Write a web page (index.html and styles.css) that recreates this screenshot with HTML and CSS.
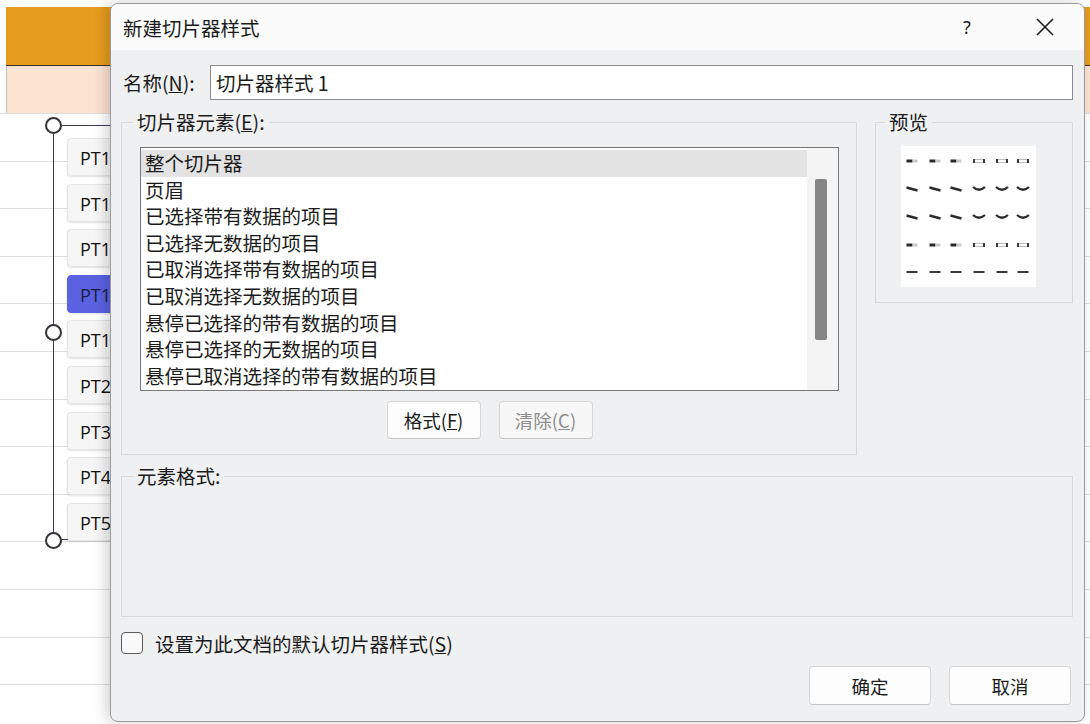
FILE: index.html
```html
<!DOCTYPE html>
<html lang="zh-CN">
<head>
    <meta charset="UTF-8">
    <title>新建切片器样式</title>
    <link rel="stylesheet" href="styles.css">
</head>
<body>
    <div class="sheet">
        <div class="row row-top"></div>
        <div class="row row-head"><div class="cell-head"></div></div>
        <div class="row row-sub"><div class="cell-sub"></div></div>
        <div class="row"></div><div class="row"></div><div class="row"></div>
        <div class="row"></div><div class="row"></div><div class="row"></div>
        <div class="row"></div><div class="row"></div><div class="row"></div>
        <div class="row"></div><div class="row"></div><div class="row"></div>
    </div>

    <!-- slicer sitting on the sheet -->
    <div class="slicer-frame"></div>
    <span class="handle handle-top"></span>
    <span class="handle handle-mid"></span>
    <span class="handle handle-bottom"></span>
    <div class="slicer-items">
        <div class="slicer-item">PT1</div>
        <div class="slicer-item">PT1</div>
        <div class="slicer-item">PT1</div>
        <div class="slicer-item selected">PT1</div>
        <div class="slicer-item">PT1</div>
        <div class="slicer-item">PT2</div>
        <div class="slicer-item">PT3</div>
        <div class="slicer-item">PT4</div>
        <div class="slicer-item">PT5</div>
    </div>

    <div class="dialog">
        <div class="titlebar">
            <span class="title">新建切片器样式</span>
            <span class="help">?</span>
            <span class="close">
                <svg width="18" height="18" viewBox="0 0 18 18"><path d="M1 1 L17 17 M17 1 L1 17" stroke="#1b1b1b" stroke-width="1.6" fill="none"/></svg>
            </span>
        </div>

        <div class="dialog-body">
            <div class="name-row">
                <label class="name-label">名称(<u>N</u>):</label>
                <div class="name-input">切片器样式 1</div>
            </div>

            <div class="top-row">
                <fieldset class="group group-elements">
                    <legend>切片器元素(<u>E</u>):</legend>
                    <div class="listbox">
                        <div class="list-items">
                            <div class="list-item active">整个切片器</div>
                            <div class="list-item">页眉</div>
                            <div class="list-item">已选择带有数据的项目</div>
                            <div class="list-item">已选择无数据的项目</div>
                            <div class="list-item">已取消选择带有数据的项目</div>
                            <div class="list-item">已取消选择无数据的项目</div>
                            <div class="list-item">悬停已选择的带有数据的项目</div>
                            <div class="list-item">悬停已选择的无数据的项目</div>
                            <div class="list-item">悬停已取消选择的带有数据的项目</div>
                        </div>
                        <div class="scrollbar"><div class="thumb"></div></div>
                    </div>
                    <div class="list-buttons">
                        <button class="btn">格式(<u>F</u>)</button>
                        <button class="btn" disabled>清除(<u>C</u>)</button>
                    </div>
                </fieldset>

                <fieldset class="group group-preview">
                    <legend>预览</legend>
                    <div class="preview">
                        <svg width="135" height="141" viewBox="0 0 135 141">
                            <defs>
                                <g id="sel">
                                    <rect x="-5.5" y="-1.5" width="6" height="3" fill="#2a2a2a"/>
                                    <rect x="0.5" y="-1.5" width="5" height="3" fill="#c9c9c9"/>
                                </g>
                                <g id="off">
                                    <rect x="-5.5" y="-1.5" width="11" height="3" fill="none" stroke="#bdbdbd" stroke-width="1"/>
                                    <rect x="-6" y="-2" width="2" height="4" fill="#3a3a3a"/>
                                    <rect x="4" y="-2" width="2" height="4" fill="#3a3a3a"/>
                                </g>
                                <path id="slant" d="M-5.5 -1.5 L5.5 1.5" stroke="#2a2a2a" stroke-width="2.4"/>
                                <path id="smile" d="M-6 -2 Q0 3.5 6 -2" stroke="#2a2a2a" stroke-width="2.2" fill="none"/>
                                <rect id="flat" x="-5.5" y="-1" width="11" height="2" fill="#3a3a3a"/>
                            </defs>
                            <use href="#sel" x="11" y="15"/><use href="#sel" x="34" y="15"/><use href="#sel" x="55" y="15"/>
                            <use href="#off" x="78" y="15"/><use href="#off" x="101" y="15"/><use href="#off" x="122" y="15"/>
                            <use href="#slant" x="11" y="43"/><use href="#slant" x="34" y="43"/><use href="#slant" x="55" y="43"/>
                            <use href="#smile" x="78" y="43"/><use href="#smile" x="101" y="43"/><use href="#smile" x="122" y="43"/>
                            <use href="#slant" x="11" y="71"/><use href="#slant" x="34" y="71"/><use href="#slant" x="55" y="71"/>
                            <use href="#smile" x="78" y="71"/><use href="#smile" x="101" y="71"/><use href="#smile" x="122" y="71"/>
                            <use href="#sel" x="11" y="99"/><use href="#sel" x="34" y="99"/><use href="#sel" x="55" y="99"/>
                            <use href="#off" x="78" y="99"/><use href="#off" x="101" y="99"/><use href="#off" x="122" y="99"/>
                            <use href="#flat" x="11" y="126"/><use href="#flat" x="34" y="126"/><use href="#flat" x="55" y="126"/>
                            <use href="#flat" x="78" y="126"/><use href="#flat" x="101" y="126"/><use href="#flat" x="122" y="126"/>
                        </svg>
                    </div>
                </fieldset>
            </div>

            <fieldset class="group group-format">
                <legend>元素格式:</legend>
            </fieldset>

            <div class="check-row">
                <span class="checkbox"></span>
                <span class="check-label">设置为此文档的默认切片器样式(<u>S</u>)</span>
            </div>

            <div class="dialog-buttons">
                <button class="btn btn-wide">确定</button>
                <button class="btn btn-wide">取消</button>
            </div>
        </div>
    </div>
</body>
</html>
```

FILE: styles.css
```css
body {
    margin: 0;
    width: 1090px;
    height: 724px;
    overflow: hidden;
    background-color: #fff;
    font-family: "Noto Sans CJK SC", "Noto Sans", sans-serif;
    color: #1b1b1b;
}
.sheet {
    display: flex;
    flex-direction: column;
}
.row {
    height: 47.6px;
    box-sizing: border-box;
    border-bottom: 1px solid #dedede;
}
.row-top {
    height: 7px;
    border-bottom: none;
}
.row-head {
    height: 59px;
    border-bottom: none;
    padding-left: 6px;
}
.cell-head {
    height: 100%;
    background-color: #e69c1e;
    border-bottom: 1px solid #3b3025;
    box-sizing: border-box;
}
.row-sub {
    height: 48px;
    padding-left: 6px;
}
.cell-sub {
    height: 100%;
    background-color: #fbe3d2;
    border-left: 1px solid #c8c0b8;
    box-sizing: border-box;
}

/* slicer */
.slicer-frame {
    position: absolute;
    left: 53px;
    top: 125px;
    width: 200px;
    height: 415px;
    border: 1.5px solid #3a3a58;
    box-sizing: border-box;
}
.handle {
    position: absolute;
    left: 45px;
    width: 13px;
    height: 13px;
    border: 2px solid #333;
    border-radius: 50%;
    background-color: #fff;
}
.handle-top { top: 117px; }
.handle-mid { top: 324px; }
.handle-bottom { top: 532px; }
.slicer-items {
    position: absolute;
    left: 67px;
    top: 138px;
    display: flex;
    flex-direction: column;
    gap: 7.6px;
}
.slicer-item {
    width: 80px;
    height: 38px;
    box-sizing: border-box;
    padding-left: 12px;
    line-height: 38px;
    font-family: "Open Sans", "Noto Sans", sans-serif;
    font-size: 18px;
    font-weight: 500;
    color: #111;
    background-color: #f6f6f6;
    border: 1px solid #e4e4e4;
    border-radius: 4px;
    box-shadow: 0 1px 2px rgba(0, 0, 0, 0.12);
}
.slicer-item.selected {
    background-color: #5a62e2;
    border-color: #5a62e2;
    color: #1c1c40;
}

/* dialog */
.dialog {
    position: absolute;
    left: 110px;
    top: 3px;
    width: 975px;
    height: 719px;
    background-color: #eff0f2;
    border: 1px solid #9a9a9a;
    border-radius: 8px;
    box-sizing: border-box;
    overflow: hidden;
    box-shadow: -4px 0 14px rgba(0, 0, 0, 0.18);
    display: flex;
    flex-direction: column;
}
.titlebar {
    height: 46px;
    flex-shrink: 0;
    display: flex;
    align-items: center;
    padding-left: 12px;
    background-color: #fbfbfb;
}
.title {
    font-size: 19.5px;
    flex: 1;
}
.help {
    width: 46px;
    text-align: center;
    font-family: "Noto Sans", sans-serif;
    font-size: 18px;
    margin-right: 32px;
}
.close {
    width: 46px;
    display: flex;
    justify-content: center;
    margin-right: 16px;
}
.dialog-body {
    padding: 15px 11px 0 10px;
    font-size: 19.5px;
}
.name-row {
    display: flex;
    height: 35px;
    align-items: center;
}
.name-label {
    width: 89px;
    padding-left: 2px;
    box-sizing: border-box;
}
.name-input {
    flex: 1;
    height: 35px;
    line-height: 33px;
    box-sizing: border-box;
    padding-left: 5px;
    background-color: #fff;
    border: 1px solid #8c8c8c;
}
.top-row {
    display: flex;
    align-items: flex-start;
    gap: 18px;
    margin-top: 10px;
}
.group {
    margin: 0;
    padding: 0;
    border: 1px solid #d9d9d9;
    min-width: 0;
}
.group legend {
    margin-left: 11px;
    padding: 0 4px;
    line-height: 24px;
}
.group-elements {
    width: 736px;
    box-sizing: border-box;
    padding: 13px 0 15px 18px;
}
.group-elements legend {
    margin-left: -7px;
}
.listbox {
    width: 699px;
    height: 244px;
    box-sizing: border-box;
    border: 1px solid #777;
    background-color: #fff;
    display: flex;
    overflow: hidden;
}
.list-items {
    flex: 1;
    padding-top: 2px;
}
.list-item {
    height: 26.6px;
    line-height: 26.6px;
    padding-left: 4px;
    white-space: nowrap;
}
.list-item.active {
    background-color: #e3e3e3;
}
.scrollbar {
    width: 31px;
    background-color: #f4f4f4;
    padding: 31px 0 0 8px;
    box-sizing: border-box;
}
.thumb {
    width: 12px;
    height: 161px;
    background-color: #868686;
    border-radius: 2px;
}
.list-buttons {
    display: flex;
    justify-content: center;
    gap: 18px;
    width: 699px;
    margin-top: 10px;
}
.btn {
    width: 94px;
    height: 38px;
    padding: 0;
    font-family: "Noto Sans CJK SC", "Noto Sans", sans-serif;
    font-size: 18.5px;
    color: #1b1b1b;
    background-color: #fdfdfd;
    border: 1px solid #d6d6d6;
    border-bottom-color: #c4c4c4;
    border-radius: 4px;
}
.btn:disabled {
    color: #8d8d8d;
    background-color: #f7f7f7;
}
.group-preview {
    width: 198px;
    box-sizing: border-box;
    padding: 12px 0 15px 25px;
}
.group-preview legend {
    margin-left: -16px;
}
.preview {
    width: 135px;
    height: 141px;
    background-color: #fff;
}
.preview svg {
    display: block;
}
.group-format {
    margin-top: 9px;
    height: 153px;
    box-sizing: border-box;
}
.check-row {
    display: flex;
    align-items: center;
    gap: 12px;
    margin-top: 15px;
    height: 22px;
}
.checkbox {
    width: 22px;
    height: 22px;
    box-sizing: border-box;
    border: 1.5px solid #5b5b5b;
    border-radius: 4px;
    background-color: #f9f9f9;
}
.dialog-buttons {
    display: flex;
    justify-content: flex-end;
    gap: 18px;
    margin-top: 12px;
    padding-right: 2px;
}
.btn-wide {
    width: 122px;
    height: 39px;
}
```
